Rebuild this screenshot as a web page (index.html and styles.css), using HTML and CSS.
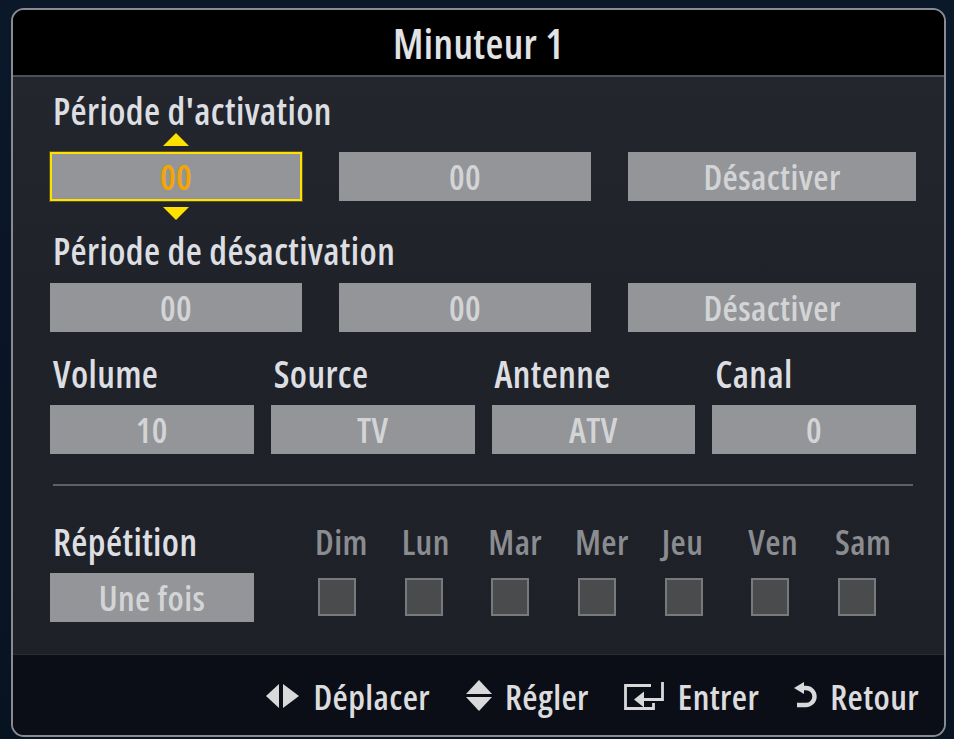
FILE: index.html
```html
<!DOCTYPE html>
<html lang="fr">
<head>
<meta charset="utf-8">
<title>Minuteur 1</title>
<link rel="stylesheet" href="styles.css">
</head>
<body>
<div class="panel">
  <div class="header">Minuteur 1</div>
  <div class="content">
    <div class="label first">Période d'activation</div>
    <div class="row3">
      <div class="box selected">00</div>
      <div class="box">00</div>
      <div class="box">Désactiver</div>
    </div>
    <div class="label second">Période de désactivation</div>
    <div class="row3">
      <div class="box">00</div>
      <div class="box">00</div>
      <div class="box">Désactiver</div>
    </div>
    <div class="row4 labels4">
      <div class="label">Volume</div>
      <div class="label">Source</div>
      <div class="label">Antenne</div>
      <div class="label">Canal</div>
    </div>
    <div class="row4">
      <div class="box">10</div>
      <div class="box">TV</div>
      <div class="box">ATV</div>
      <div class="box">0</div>
    </div>
    <div class="sep"></div>
    <div class="repeat">
      <div class="rep-col">
        <div class="label">Répétition</div>
        <div class="box">Une fois</div>
      </div>
      <div class="days">
        <div class="day"><span class="dname">Dim</span><span class="check"></span></div>
        <div class="day"><span class="dname">Lun</span><span class="check"></span></div>
        <div class="day"><span class="dname">Mar</span><span class="check"></span></div>
        <div class="day"><span class="dname">Mer</span><span class="check"></span></div>
        <div class="day"><span class="dname">Jeu</span><span class="check"></span></div>
        <div class="day"><span class="dname">Ven</span><span class="check"></span></div>
        <div class="day"><span class="dname">Sam</span><span class="check"></span></div>
      </div>
    </div>
  </div>
  <div class="footer">
    <div class="hint">
      <svg class="ic" viewBox="0 0 36 26" width="36" height="26"><polygon points="14,1 14,25 1,13"/><polygon points="18,1 18,25 34,13"/></svg>
      <span>Déplacer</span>
    </div>
    <div class="hint">
      <svg class="ic" viewBox="0 0 28 34" width="28" height="34"><polygon points="14,1 27,15 1,15"/><polygon points="1,18 27,18 14,32"/></svg>
      <span>Régler</span>
    </div>
    <div class="hint">
      <svg class="ic" viewBox="0 0 42 28" width="42" height="28"><path d="M27 3.5 H1.5 V26.5 H29.5 V21" fill="none" stroke="#d9d9db" stroke-width="2.8"/><path d="M38.5 0 V17.5 H18" fill="none" stroke="#d9d9db" stroke-width="2.8"/><polygon points="10,17.5 20,9.5 20,25.5"/></svg>
      <span>Entrer</span>
    </div>
    <div class="hint">
      <svg class="ic" viewBox="0 0 24 28" width="24" height="28"><path d="M7 6 H12 A8.5 8.5 0 0 1 12 23 H3" fill="none" stroke="#d9d9db" stroke-width="4.4"/><polygon points="0,6 10,0 10,12"/></svg>
      <span>Retour</span>
    </div>
  </div>
</div>
</body>
</html>
```
FILE: styles.css
```css
* { box-sizing: border-box; }
html, body { margin: 0; padding: 0; }
body {
  width: 954px;
  height: 739px;
  background: linear-gradient(180deg, #0b182a 0%, #081322 100%);
  font-family: "Open Sans", "DejaVu Sans Condensed", sans-serif;
  font-stretch: 75%;
  font-weight: 560;
  letter-spacing: 0.4px;
  overflow: hidden;
}
.panel {
  margin: 8px 0 0 11px;
  width: 935px;
  height: 729px;
  border: 2px solid #888b91;
  border-radius: 13px;
  overflow: hidden;
  display: flex;
  flex-direction: column;
  background: #1f2229;
}
.header {
  height: 67px;
  background: #000;
  border-bottom: 2px solid #4d5057;
  color: #e2e3e5;
  font-size: 41px;
  display: flex;
  align-items: center;
  justify-content: center;
  flex: none;
}
.content {
  flex: 1;
  padding: 0 28px 0 37px;
  background: linear-gradient(180deg, #23262d 0%, #1f2229 40%, #1e2128 100%);
}
.label {
  color: #dcdee1;
  font-size: 37px;
  line-height: 40px;
  padding-left: 3px;
  white-space: nowrap;
}
.label.first { margin-top: 14px; }
.label.second { margin-top: 30px; }
.row3 {
  display: grid;
  grid-template-columns: 252px 252px 288px;
  column-gap: 37px;
}
.label.first + .row3 { margin-top: 21px; }
.label.second + .row3 { margin-top: 12px; }
.row4 {
  display: grid;
  grid-template-columns: repeat(4, 1fr);
  column-gap: 17px;
}
.labels4 { margin-top: 22px; }
.labels4 + .row4 { margin-top: 11px; }
.box {
  height: 49px;
  background: #939598;
  color: #d3d4d6;
  font-size: 35px;
  display: flex;
  align-items: center;
  justify-content: center;
  position: relative;
}
.box.selected {
  border: 2px solid #ffe000;
  color: #f4a600;
  box-shadow: 0 0 0 1px rgba(255, 224, 0, 0.25);
}
.box.selected::before,
.box.selected::after {
  content: "";
  position: absolute;
  left: 50%;
  margin-left: -13px;
  width: 0;
  height: 0;
  border-left: 13px solid transparent;
  border-right: 13px solid transparent;
}
.box.selected::before {
  top: -21px;
  border-bottom: 13px solid #ffe000;
}
.box.selected::after {
  bottom: -21px;
  border-top: 13px solid #ffe000;
}
.sep {
  margin: 30px 3px 0 3px;
  height: 2px;
  background: #5d6067;
}
.repeat {
  display: flex;
  margin-top: 36px;
}
.rep-col {
  width: 204px;
  flex: none;
  margin-right: 61px;
}
.rep-col .box { margin-top: 11px; }
.days {
  display: grid;
  grid-template-columns: repeat(6, 86.67px) 80px;
}
.day {
  display: flex;
  flex-direction: column;
  align-items: flex-start;
}
.dname {
  color: #8a8c90;
  font-size: 35px;
  line-height: 40px;
}
.check {
  margin-top: 16px;
  margin-left: 3px;
  width: 38px;
  height: 38px;
  background: #4a4b4d;
  border: 2px solid #77797c;
}
.footer {
  height: 81px;
  flex: none;
  background: #0b0e16;
  border-top: 1px solid #2a2d34;
  display: flex;
  align-items: center;
  justify-content: flex-end;
  padding-right: 25px;
  padding-top: 2px;
  gap: 35px;
}
.hint {
  display: flex;
  align-items: center;
  gap: 12px;
  color: #dcdcde;
  font-size: 35px;
}
.ic { fill: #d9d9db; flex: none; }
```
